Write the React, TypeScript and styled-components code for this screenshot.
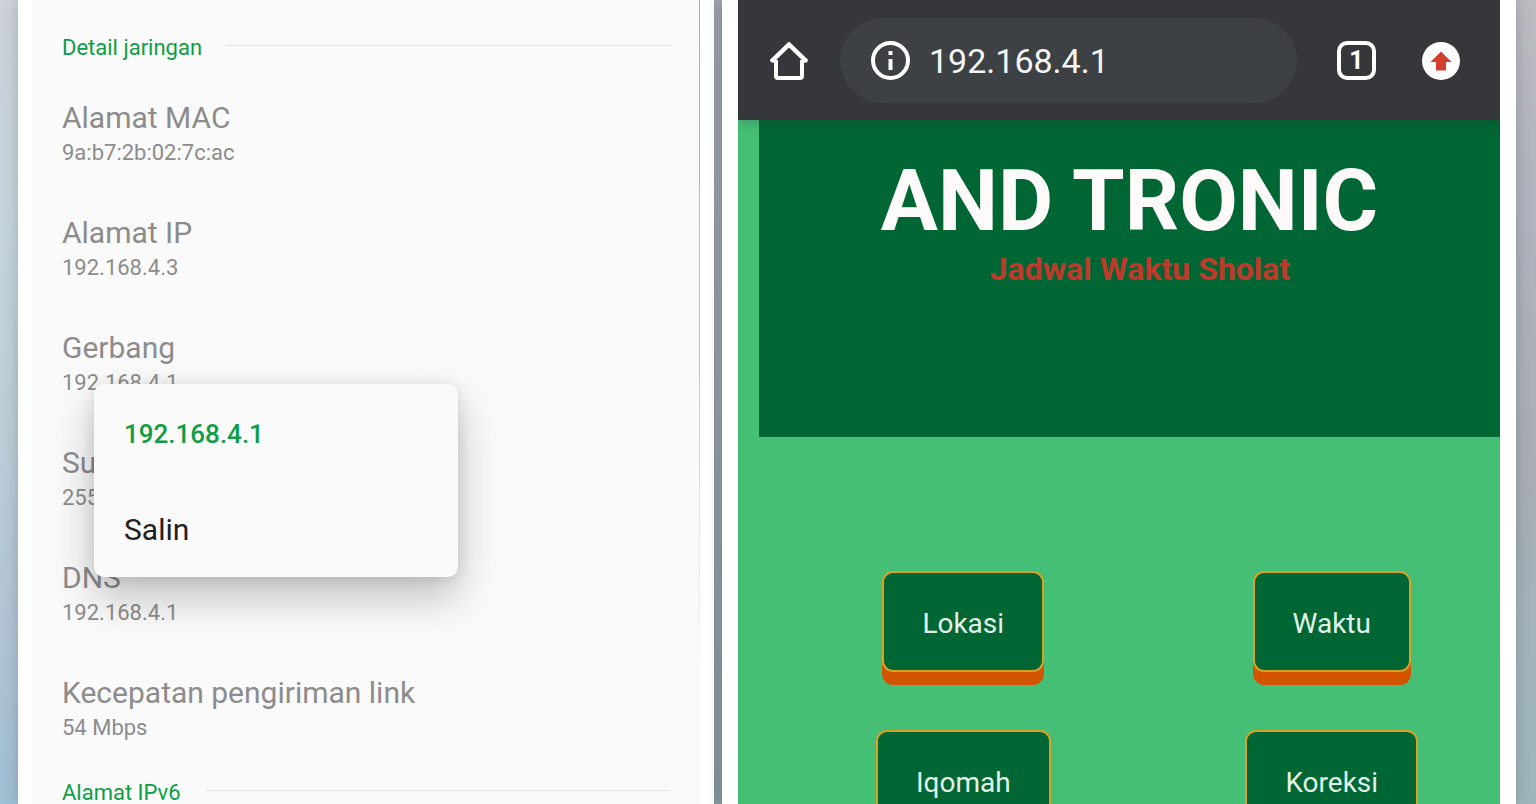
import React from "react";
import styled, { createGlobalStyle } from "styled-components";

const GlobalStyle = createGlobalStyle`
  *, *::before, *::after { box-sizing: border-box; }
  body { margin: 0; font-family: Roboto, "Liberation Sans", sans-serif; }
  h1, h2, p, dl, dt, dd { margin: 0; font-weight: 400; }
  button, input { font-family: inherit; }
`;

const Page = styled.main`
  display: flex;
  gap: 8px;
  height: 100vh;
  overflow: hidden;
  padding: 0 20px 0 18px;
  background:
    linear-gradient(#a4a9ae, #98a4ab 50%, #8a9da6) center / calc(100% - 60px) 100% no-repeat,
    linear-gradient(#ced2da, #c6d5dd 25%, #bccfd9 50%, #b4c5d3 75%, #9fc0d5) left / 30px 100% no-repeat,
    linear-gradient(#bcbcc1, #b1b4be 25%, #a9adb5 60%, #a2b5bb 80%, #9fb6be) right / 30px 100% no-repeat;
`;

const Frame = styled.section<{ $grow: number; $edge: number }>`
  flex: ${(p) => p.$grow} 1 0;
  min-width: 0;
  display: flex;
  padding: 0 ${(p) => p.$edge}px;
  background: #fff;
  box-shadow: 0 0 14px rgba(60, 65, 70, 0.28);
`;

const Settings = styled.div`
  position: relative;
  flex: 1;
  min-width: 0;
  padding: 34px 30px 0;
  background: #fafafa;

  &::after {
    content: "";
    position: absolute;
    top: 0;
    right: 0;
    width: 1px;
    height: 100%;
    background: linear-gradient(#acacac, #c4c4c4 45%, #e4e4e4 65%, #fafafa 85%);
  }
`;

const SectionHead = styled.div`
  display: flex;
  align-items: center;
  gap: 24px;
`;

const SectionTitle = styled.h2`
  color: #0f9d45;
  font-size: 22px;
  line-height: 28px;
`;

const Rule = styled.hr`
  flex: 1;
  margin: 0 0 5px;
  border: 0;
  border-top: 1px solid #e4e4e4;
`;

const Details = styled.dl`
  display: flex;
  flex-direction: column;
  gap: 45px;
  padding: 38px 0 34px;
`;

const Detail = styled.div`
  color: #8c8c8c;
`;

const DetailLabel = styled.dt`
  font-size: 30px;
  line-height: 36px;
`;

const DetailValue = styled.dd`
  font-size: 22px;
  line-height: 34px;
`;

const Popup = styled.div`
  position: absolute;
  z-index: 1;
  top: 384px;
  left: 62px;
  width: 364px;
  border-radius: 10px;
  background: #fafafa;
  box-shadow: 0 20px 44px rgba(0, 0, 0, 0.24), 0 2px 14px rgba(0, 0, 0, 0.1);
`;

const PopupTitle = styled.p`
  padding: 2px 30px 0;
  color: #0f9d45;
  font-size: 26px;
  font-weight: 500;
  line-height: 96px;
`;

const PopupAction = styled.button`
  display: block;
  width: 100%;
  padding: 0 30px;
  border: 0;
  background: none;
  color: #212121;
  font-size: 30px;
  line-height: 95px;
  text-align: left;
`;

const Browser = styled.div`
  flex: 1;
  min-width: 0;
  display: flex;
  flex-direction: column;
  overflow: hidden;
  background: #44bf75;
`;

const Toolbar = styled.header`
  position: relative;
  flex: none;
  display: flex;
  align-items: center;
  height: 120px;
  padding: 1px 40px 0 32px;
  background: #36373b;
  box-shadow: 0 1px 12px rgba(40, 50, 45, 0.35);
`;

const IconButton = styled.button`
  flex: none;
  display: flex;
  padding: 0;
  border: 0;
  background: none;
`;

const AddressBar = styled.label`
  flex: 1;
  min-width: 0;
  display: flex;
  align-items: center;
  gap: 19px;
  height: 85px;
  margin: 0 40px 0 32px;
  padding: 0 31px;
  border-radius: 43px;
  background: #3d4144;
`;

const AddressInput = styled.input`
  flex: 1;
  min-width: 0;
  padding: 0;
  border: 0;
  outline: 0;
  background: none;
  color: #f5f5f6;
  font-size: 34px;
  line-height: 40px;
`;

const TabCount = styled.button`
  flex: none;
  width: 39px;
  height: 39px;
  margin-right: 46px;
  padding: 1px 0 0;
  border: 4px solid #fff;
  border-radius: 10px;
  background: none;
  color: #fff;
  font-size: 25px;
  font-weight: 700;
  line-height: 30px;
`;

const Banner = styled.div`
  flex: none;
  height: 317px;
  margin-left: 21px;
  padding-top: 32px;
  background: #006633;
  text-align: center;
`;

const BannerTitle = styled.h1`
  color: #fffafa;
  font-size: 85px;
  font-weight: 700;
  line-height: 98px;
`;

const BannerSubtitle = styled.p`
  padding-left: 21px;
  color: #c0392b;
  font-size: 32px;
  font-weight: 700;
  line-height: 38px;
`;

const Menu = styled.nav`
  flex: none;
  display: grid;
  grid-template-columns: 1fr 1fr;
  gap: 58px 0;
  justify-items: center;
  margin: 134px -16px 0 41px;
`;

const MenuButton = styled.button`
  height: 101px;
  padding: 4px 38px 0;
  border: 2px solid #d9a125;
  border-radius: 11px;
  background: #006633;
  box-shadow: 0 13px 0 #d35400;
  color: #e2f2e9;
  font-size: 28px;
  line-height: 34px;
`;

const details = [
  ["Alamat MAC", "9a:b7:2b:02:7c:ac"],
  ["Alamat IP", "192.168.4.3"],
  ["Gerbang", "192.168.4.1"],
  ["Subnet mask", "255.255.255.0"],
  ["DNS", "192.168.4.1"],
  ["Kecepatan pengiriman link", "54 Mbps"],
];

const menuItems = ["Lokasi", "Waktu", "Iqomah", "Koreksi"];

function Section({ title }: { title: string }) {
  return (
    <SectionHead>
      <SectionTitle>{title}</SectionTitle>
      <Rule />
    </SectionHead>
  );
}

const HomeIcon = () => (
  <svg width="38" height="38" viewBox="0 0 38 38" fill="none" stroke="#fff" strokeWidth="4">
    <path d="M1.500 19.500 19 2.500l17.500 17" strokeWidth="4.500" />
    <path d="M0.500 18.800H6M32 18.800H37.500" strokeWidth="3" />
    <path d="M6 18V34a2 2 0 0 0 2 2H30a2 2 0 0 0 2-2V18" />
  </svg>
);

const InfoIcon = () => (
  <svg width="39" height="39" viewBox="0 0 39 39" fill="none">
    <circle cx="19.500" cy="19.500" r="17.500" stroke="#fff" strokeWidth="4" />
    <path d="M17.500 10h4v4h-4zM17.500 18h4v11h-4z" fill="#fff" />
  </svg>
);

const UpdateIcon = () => (
  <svg width="38" height="38" viewBox="0 0 38 38">
    <circle cx="19" cy="19" r="19" fill="#fff" />
    <path d="M19 9.500 29.500 20H24v8.500H14V20H8.500z" fill="#d23f31" />
  </svg>
);

export default function App() {
  return (
    <>
      <GlobalStyle />
      <Page>
        <Frame $grow={668} $edge={14}>
          <Settings>
            <Section title="Detail jaringan" />
            <Details>
              {details.map(([label, value]) => (
                <Detail key={label}>
                  <DetailLabel>{label}</DetailLabel>
                  <DetailValue>{value}</DetailValue>
                </Detail>
              ))}
            </Details>
            <Section title="Alamat IPv6" />
            <Popup>
              <PopupTitle>192.168.4.1</PopupTitle>
              <PopupAction type="button">Salin</PopupAction>
            </Popup>
          </Settings>
        </Frame>
        <Frame $grow={762} $edge={16}>
          <Browser>
            <Toolbar>
              <IconButton type="button" aria-label="Beranda">
                <HomeIcon />
              </IconButton>
              <AddressBar>
                <InfoIcon />
                <AddressInput type="text" aria-label="Alamat situs" defaultValue="192.168.4.1" />
              </AddressBar>
              <TabCount type="button">1</TabCount>
              <IconButton type="button" aria-label="Perbarui">
                <UpdateIcon />
              </IconButton>
            </Toolbar>
            <Banner>
              <BannerTitle>AND TRONIC</BannerTitle>
              <BannerSubtitle>Jadwal Waktu Sholat</BannerSubtitle>
            </Banner>
            <Menu>
              {menuItems.map((item) => (
                <MenuButton key={item} type="button">
                  {item}
                </MenuButton>
              ))}
            </Menu>
          </Browser>
        </Frame>
      </Page>
    </>
  );
}
